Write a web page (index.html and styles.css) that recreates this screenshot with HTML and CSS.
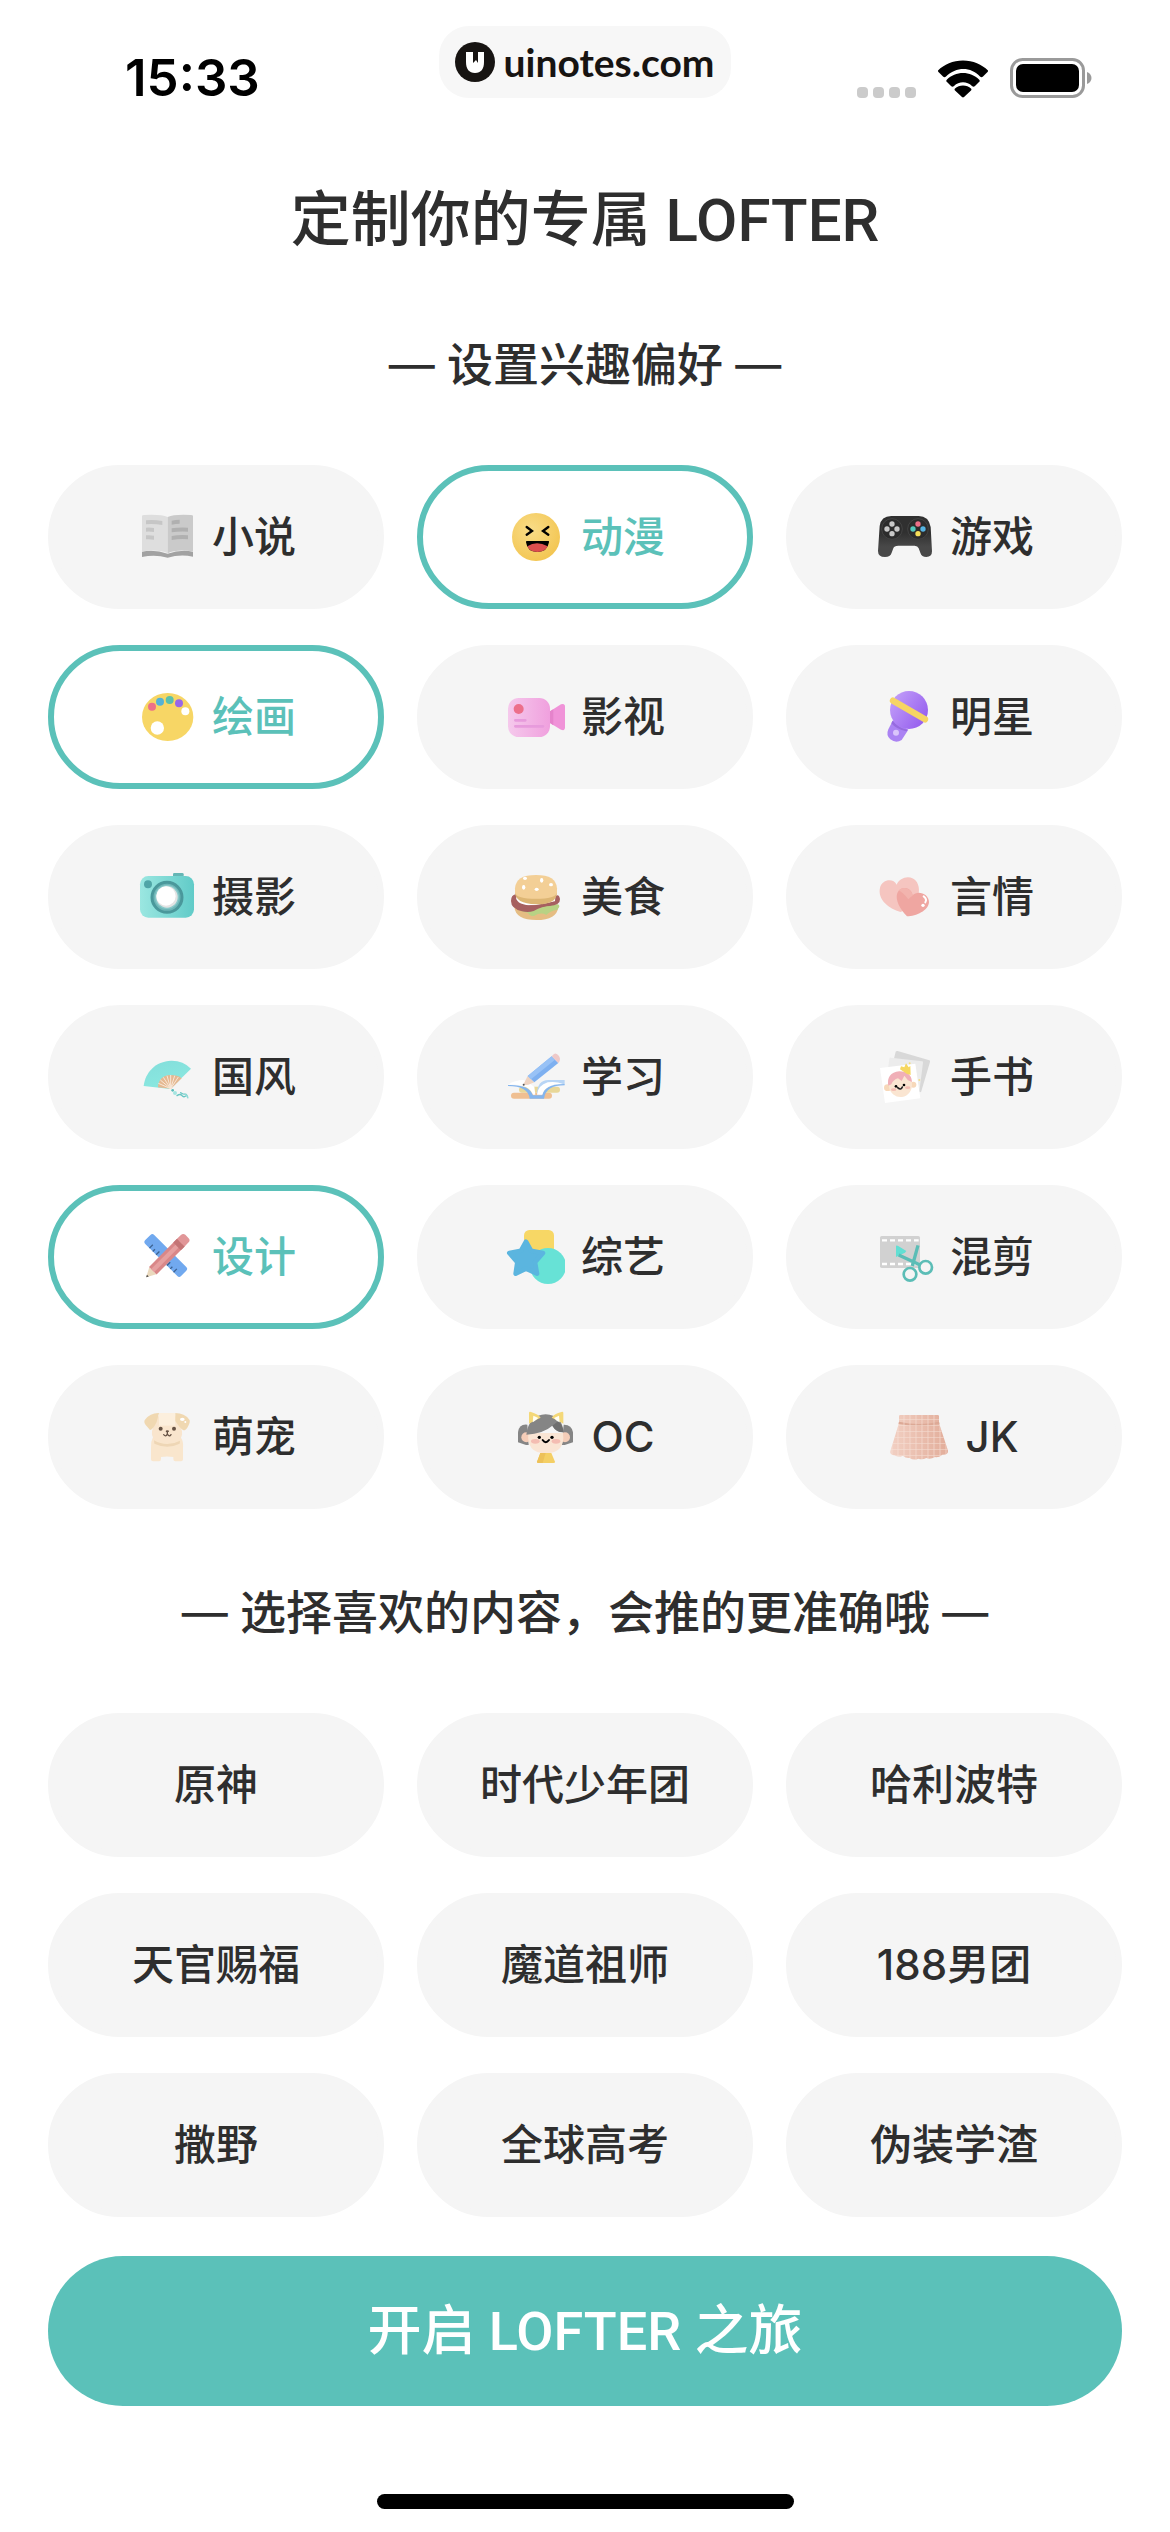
FILE: index.html
```html
<!DOCTYPE html>
<html lang="zh-CN">
<head>
  <meta charset="UTF-8" />
  <meta name="viewport" content="width=device-width, initial-scale=1.0" />
  <title>LOFTER</title>
  <link rel="stylesheet" href="styles.css">
</head>
<body>
  <header class="status-bar">
    <span class="time">15:33</span>
    <div class="watermark">
      <svg class="watermark-logo" viewBox="0 0 40 40" aria-hidden="true">
        <circle cx="20" cy="20" r="20" fill="#171412"/>
        <path d="M11 10h7v11l3-3 2 3V10h6v10c0 7-3 11-9 11s-9-4-9-11z" fill="#fff"/>
      </svg>
      <span>uinotes.com</span>
    </div>
    <div class="status-icons">
      <svg class="signal" viewBox="0 0 60 12" aria-hidden="true" fill="#cbcbcb">
        <rect x="1" y="1" width="11" height="11" rx="4"/><rect x="17" y="1" width="11" height="11" rx="4"/>
        <rect x="33" y="1" width="11" height="11" rx="4"/><rect x="49" y="1" width="11" height="11" rx="4"/>
      </svg>
      <svg class="wifi" viewBox="0 0 50 37" aria-hidden="true">
        <path d="M25 0C15 0 6 4 0 10c0 1 0 1 1 2l4 4c1 1 2 1 3 0 10-10 25-10 34 0 1 1 2 1 3 0l4-4c1-1 1-1 1-2C44 4 35 0 25 0z"/>
        <path d="M25 12.500c-6 0-12 2.500-16 6.500-1 1-1 2 0 2.500l4 4c1 1 2 1 3 0 5-5 13-5 18 0 1 1 2 1 3 0l4-4c1-.5 1-1.500 0-2.500-4-4-10-6.500-16-6.500z"/>
        <path d="M25 25c-3 0-6 1.200-8 3-.6.600-.6 1.500 0 2l7 6.500c.6.600 1.400.600 2 0l7-6.500c.6-.5.600-1.400 0-2-2-1.800-5-3-8-3z"/>
      </svg>
      <svg class="battery" viewBox="0 0 82 40" aria-hidden="true">
        <rect x="1.500" y="1.500" width="72" height="37" rx="11" fill="none" stroke="#9a9a9a" stroke-width="3"/>
        <rect x="6" y="6" width="63" height="28" rx="7"/>
        <path d="M77 14c6 2 6 10 0 12z" fill="#9a9a9a"/>
      </svg>
    </div>
  </header>

  <main class="container">
    <h1 class="title">定制你的专属<span class="latin"> LOFTER</span></h1>

    <h2 class="section-title"><span class="dash">—</span> 设置兴趣偏好 <span class="dash">—</span></h2>
    <div class="chips">
      <button type="button" class="chip" aria-pressed="false">
        <svg class="chip-icon" viewBox="0 0 180 180" aria-hidden="true">
          <path d="M18 134q38-7 77 6 38-13 76-6v15q-38-8-76 3-38-11-77-2z" fill="#a2a2a2"/>
          <path d="M18 28q0-4 6-4 50-3 71 6v109q-26-13-77-6z" fill="#dedede"/>
          <path d="M171 28q0-4-6-4-50-3-70 6v109q26-13 76-6z" fill="#cacaca"/>
          <path d="M30 40q24-2 49 2v12q-25-4-49-2zM30 62q12-1 24 1v12q-12-2-24-1zM30 85q12-1 24 1v12q-12-2-24-1z" fill="#c6c6c6"/>
          <path d="M107 41q12-3 24-3v12q-12 0-24 3zM107 64q24-4 49-2v12q-25-2-49 2zM107 87q24-4 49-2v12q-25-2-49 2z" fill="#b0b0b0"/>
        </svg>
        小说
      </button>
      <button type="button" class="chip selected" aria-pressed="true">
        <svg class="chip-icon" viewBox="0 0 180 180" aria-hidden="true">
          <radialGradient id="face" cx=".4" cy=".35" r=".7"><stop offset="0" stop-color="#f8dc88"/><stop offset="1" stop-color="#f3c550"/></radialGradient>
          <circle cx="93" cy="90" r="72" fill="url(#face)"/>
          <path d="M65 60l16 12-16 11M130 60l-16 12 16 11" fill="none" stroke="#000" stroke-width="7" stroke-linecap="round"/>
          <path d="M66 102h64q3 0 2 4-5 29-35 29t-34-29q-1-4 3-4z" fill="#000"/>
          <path d="M67 118q28-18 61 0-8 17-31 17t-30-17z" fill="#dc4e4e"/>
        </svg>
        动漫
      </button>
      <button type="button" class="chip" aria-pressed="false">
        <svg class="chip-icon" viewBox="0 0 180 180" aria-hidden="true">
          <linearGradient id="pad" x2="0" y2="1"><stop offset=".4" stop-color="#303030"/><stop offset=".75" stop-color="#484848"/></linearGradient>
          <path d="M52 27h82q30 0 36 33l4 73q0 17-17 17-14 0-18-13l-5-13q-3-8-12-8H73q-13 0-15 8l-5 13q-4 13-20 13-21 0-21-18l5-75q4-30 35-30z" fill="url(#pad)"/>
          <circle cx="54" cy="66" r="31" fill="#2c2c2c" stroke="#434343" stroke-width="3"/>
          <circle cx="132" cy="66" r="31" fill="#2c2c2c" stroke="#434343" stroke-width="3"/>
          <g fill="#c8c8c8"><circle cx="54" cy="51" r="8"/><circle cx="39" cy="66" r="8"/><circle cx="69" cy="66" r="8"/><circle cx="54" cy="80" r="8"/></g>
          <circle cx="132" cy="51" r="8" fill="#ec6f87"/><circle cx="117" cy="66" r="8" fill="#54c8bd"/>
          <circle cx="147" cy="66" r="8" fill="#55b3e2"/><circle cx="132" cy="80" r="8" fill="#f7df59"/>
        </svg>
        游戏
      </button>

      <button type="button" class="chip selected" aria-pressed="true">
        <svg class="chip-icon" viewBox="0 0 180 180" aria-hidden="true">
          <ellipse cx="95" cy="90" rx="77" ry="72" fill="#f7d665"/>
          <circle cx="48" cy="59" r="12" fill="#ed7088"/><circle cx="72" cy="44" r="12" fill="#55b2d5"/>
          <circle cx="101" cy="39" r="12" fill="#5bc0ab"/><circle cx="129" cy="49" r="12" fill="#9967e8"/>
          <circle cx="148" cy="73" r="12" fill="#fff"/><circle cx="64" cy="123" r="20" fill="#fff"/>
        </svg>
        绘画
      </button>
      <button type="button" class="chip" aria-pressed="false">
        <svg class="chip-icon" viewBox="0 0 180 180" aria-hidden="true">
          <linearGradient id="video"><stop offset="0" stop-color="#f5c9ec"/><stop offset="1" stop-color="#f0a0de"/></linearGradient>
          <rect x="9" y="33" width="126" height="117" rx="32" fill="url(#video)"/>
          <path d="M135 73l33-21q12-4 12 7v62q0 12-12 7l-33-20z" fill="#f093d8"/>
          <path d="M135 73l10-6v48l-10-7z" fill="#e583cb"/>
          <circle cx="41" cy="66" r="15" fill="#ec6f8b"/>
          <path d="M31 100h30M31 118h83" stroke="#e79bdc" stroke-width="8" stroke-linecap="round"/>
        </svg>
        影视
      </button>
      <button type="button" class="chip" aria-pressed="false">
        <svg class="chip-icon" viewBox="0 0 180 180" aria-hidden="true">
          <linearGradient id="mic" x2="1" y2=".7"><stop offset="0" stop-color="#c6a5fa"/><stop offset="1" stop-color="#965fee"/></linearGradient>
          <path d="M57 100L43 127q-8 18 6 30 17 13 34 2l20-31z" fill="#ab83f3"/>
          <path d="M56 101q16 21 45 27l-4 5q-30-6-45-24z" fill="#966bdf"/>
          <circle cx="105" cy="69" r="57" fill="url(#mic)"/>
          <path d="M57 41l96 56" stroke="#f6d563" stroke-width="19" stroke-linecap="round"/>
          <circle cx="66" cy="137" r="9" fill="#dac5fb"/>
        </svg>
        明星
      </button>

      <button type="button" class="chip" aria-pressed="false">
        <svg class="chip-icon" viewBox="0 0 180 180" aria-hidden="true">
          <linearGradient id="camera"><stop offset="0" stop-color="#9be7e1"/><stop offset="1" stop-color="#61cbc8"/></linearGradient>
          <rect x="111" y="18" width="32" height="20" rx="4" fill="#65b6b5"/>
          <rect x="12" y="27" width="162" height="125" rx="25" fill="url(#camera)"/>
          <circle cx="36" cy="52" r="12" fill="#50a5a7"/>
          <circle cx="93" cy="91" r="45" fill="#6eb6b7" stroke="#4a989b" stroke-width="9"/>
          <circle cx="93" cy="90" r="36" fill="#8acaca"/>
          <circle cx="93" cy="90" r="32" fill="#e4e4e4"/><circle cx="90" cy="87" r="29" fill="#fff"/>
        </svg>
        摄影
      </button>
      <button type="button" class="chip" aria-pressed="false">
        <svg class="chip-icon" viewBox="0 0 180 180" aria-hidden="true">
          <path d="M28 120q4 39 66 39t66-40z" fill="#e5bd83"/>
          <path d="M36 117q60-6 123-5 9 5-2 16-23 4-33 16-16-10-37 3-14 0-18-10-26-2-33-20z" fill="#b8d284"/>
          <path d="M18 102q0-18 14-20 48 22 118 6 12-10 15 8 1 19-32 21-20 0-47 15-16 5-35 1-33-8-33-31z" fill="#a66060"/>
          <path d="M33 92q6-7 14-7l104 5-1 13q-28 7-61 12-52 1-56-23z" fill="#fff"/>
          <path d="M23 103q28 19 55 12 43 1 72-12l-12 12-55 10-42-2z" fill="#a66060"/>
          <path d="M30 75q0 35 63 37t63-37z" fill="#ddb674"/>
          <path d="M30 64q2-40 63-40t63 40v13q-5 18-63 18T30 77z" fill="#f3cf96"/>
          <g fill="#fff"><ellipse cx="60" cy="34" rx="6" ry="5"/><ellipse cx="110" cy="40" rx="5" ry="7"/><ellipse cx="138" cy="53" rx="6" ry="5"/><ellipse cx="56" cy="61" rx="5" ry="7"/><ellipse cx="95" cy="67" rx="6" ry="5"/></g>
        </svg>
        美食
      </button>
      <button type="button" class="chip" aria-pressed="false">
        <svg class="chip-icon" viewBox="0 0 180 180" aria-hidden="true">
          <path d="M80 135C44 124 10 98 18 62c6-26 41-30 50-9 10-25 46-32 61-7 20 39-14 74-49 89z" fill="#f5c5c0"/>
          <path d="M99 148C80 128 62 100 70 78c10-24 43-18 46 7 14-17 50-5 49 21-2 25-38 42-66 42z" fill="#efa6a1"/>
          <path d="M74 70q16-14 34 0 7 7 8 16-7 3-13 11-15-20-29-27z" fill="#f2b4ae"/>
          <path d="M149 88q11 8 5 18" fill="none" stroke="#fff" stroke-width="6" stroke-linecap="round"/>
          <circle cx="147" cy="115" r="5" fill="#fff"/>
        </svg>
        言情
      </button>

      <button type="button" class="chip" aria-pressed="false">
        <svg class="chip-icon" viewBox="0 0 180 180" aria-hidden="true">
          <linearGradient id="fan" x2=".4" y2="1"><stop offset="0" stop-color="#83dedb"/><stop offset="1" stop-color="#8ae8e0"/></linearGradient>
          <path d="M23 117C28 75 59 43 105 41q36-1 60 24l-62 61z" fill="url(#fan)"/>
          <path d="M66 121q2-35 37-37 22 0 34 10l-32 31z" fill="#e5b891"/>
          <path d="M104 125L67 109M104 125L73 99M104 125L82 91M104 125L93 86M104 125V84M104 125l12-39M104 125l23-35" stroke="#f8e8d8" stroke-width="3"/>
          <circle cx="110" cy="130" r="4" fill="#58bcb7"/><circle cx="117" cy="138" r="6" fill="#a5e5e1"/>
          <path d="M123 146q10-7 15 0t15-1M134 137q6 5 17 5" fill="none" stroke="#68c6c3" stroke-width="4" stroke-linecap="round"/>
          <path d="M145 141q10 3 11 13" fill="none" stroke="#91dcd8" stroke-width="4"/>
        </svg>
        国风
      </button>
      <button type="button" class="chip" aria-pressed="false">
        <svg class="chip-icon" viewBox="0 0 180 180" aria-hidden="true">
          <rect x="42" y="119" width="123" height="18" rx="9" fill="#e8d798"/>
          <rect x="18" y="137" width="123" height="18" rx="9" fill="#efbf92"/>
          <path d="M96 141q1-42 34-42h49v12q-56-1-70 33z" fill="#b8d5f5"/>
          <path d="M9 114q63-2 75 31h27q8-34 68-34v4q-57 0-62 40H74q-4-38-65-38z" fill="#84b5ee"/>
          <path d="M9 113q21-14 47-14l32 20 3 24h-7Q70 108 9 113z" fill="#fff"/>
          <path d="M96 143q3-28 32-37 23-4 46 4-54 1-62 33z" fill="#fff"/>
          <path d="M68 87l20 19-18 7-16 2z" fill="#efd4c2"/>
          <path d="M68 87l72-59 20 20-72 58z" fill="#7eb0f0"/>
          <path d="M68 87l72-59 10 10-72 59z" fill="#98c2f6"/>
          <path d="M140 28l7-7q6-4 13 4 8 9 3 19l-3 4z" fill="#eec9c8"/>
          <circle cx="56" cy="113" r="3" fill="#555"/>
        </svg>
        学习
      </button>
      <button type="button" class="chip" aria-pressed="false">
        <svg class="chip-icon" viewBox="0 0 180 180" aria-hidden="true">
          <path d="M65 14q2-3 6-2l95 28q3 1 2 5l-27 91-99-29z" fill="#d8d8d8"/>
          <path d="M46 35q1-4 5-3l93 11q4 0 3 4l-13 102-101-14z" fill="#ececec"/>
          <path d="M18 63l106-13 15 104-106 14z" fill="#fff"/>
          <ellipse cx="41" cy="122" rx="11" ry="10" fill="#f7d8b9"/><ellipse cx="118" cy="113" rx="9" ry="9" fill="#f7d8b9"/>
          <ellipse cx="79" cy="113" rx="35" ry="37" fill="#fae5d1" transform="rotate(-8 79 113)"/>
          <path d="M43 116Q36 78 76 73q36 0 38 32l-12-5-11-14-8 16-11-8q-14 4-20 18z" fill="#f0afb7"/>
          <path d="M78 67l3-9 10 3 5-12 8 12 5-4 1 27-12-4z" fill="#f6d75f"/>
          <circle cx="66" cy="118" r="4"/><circle cx="90" cy="114" r="4"/>
          <path d="M71 122q10 9 14-2" fill="none" stroke="#222" stroke-width="5" stroke-linecap="round"/>
          <ellipse cx="59" cy="128" rx="8" ry="4" fill="#f4bdb3"/><ellipse cx="101" cy="122" rx="8" ry="4" fill="#f4bdb3"/>
          <circle cx="107" cy="49" r="3" fill="#f3de83"/><circle cx="136" cy="99" r="3" fill="#f3de83"/>
        </svg>
        手书
      </button>

      <button type="button" class="chip selected" aria-pressed="true">
        <svg class="chip-icon" viewBox="0 0 180 180" aria-hidden="true">
          <g transform="rotate(45 90 86)">
            <rect x="13" y="67" width="152" height="38" rx="8" fill="#71a9ef"/>
            <path d="M39 91v14M53 96v9M67 91v14M113 91v14M127 96v9M141 91v14" stroke="#3d6392" stroke-width="4"/>
          </g>
          <g transform="rotate(-45 90 90)">
            <path d="M5 91l28-15v30z" fill="#ead9bd"/><path d="M5 91l7-4v8z" fill="#4c4947"/>
            <path d="M33 75h120v32H33z" fill="#d98788"/><path d="M33 84h120v13H33z" fill="#e6a0a0"/>
            <path d="M136 75h16v32h-16z" fill="#c47576"/>
            <path d="M152 75h15q11 0 11 9v14q0 9-11 9h-15z" fill="#e19698"/>
          </g>
        </svg>
        设计
      </button>
      <button type="button" class="chip" aria-pressed="false">
        <svg class="chip-icon" viewBox="0 0 180 180" aria-hidden="true">
          <rect x="57" y="9" width="90" height="80" rx="16" fill="#f7d765"/>
          <circle cx="129" cy="117" r="54" fill="#67e2d6"/>
          <path d="M63 44l15 27 36 7-24 28 6 34-33-15-31 15 5-34-24-28 35-7z" fill="#5bb5df" stroke="#5bb5df" stroke-width="14" stroke-linejoin="round"/>
        </svg>
        综艺
      </button>
      <button type="button" class="chip" aria-pressed="false">
        <svg class="chip-icon" viewBox="0 0 180 180" aria-hidden="true">
          <rect x="18" y="27" width="120" height="96" rx="5" fill="#d1d1d1"/>
          <path d="M24 40h110M24 111h110" stroke="#fff" stroke-width="7" stroke-dasharray="15 9"/>
          <path d="M66 56q4-1 8 2l23 14q-2 6-12 9L66 90z" fill="#62dfd3"/>
          <path d="M74 84l63 29M132 55l-17 62" stroke="#5bbdb6" stroke-width="10"/>
          <circle cx="108" cy="142" r="19" fill="#f5f5f5" stroke="#5bbdb6" stroke-width="8"/>
          <circle cx="155" cy="121" r="19" fill="#f5f5f5" stroke="#5bbdb6" stroke-width="8"/>
        </svg>
        混剪
      </button>

      <button type="button" class="chip" aria-pressed="false">
        <svg class="chip-icon" viewBox="0 0 180 180" aria-hidden="true">
          <path d="M51 91q-8 15-6 31v35q0 6 6 6h18q6 0 6-7v-6q18-3 37 0v6q0 7 6 7h17q6 0 6-6v-35q2-18-7-31z" fill="#f9e6cd"/>
          <path d="M54 100q38 22 78 1l-1 9q-37 18-76 0z" fill="#eed6b5"/>
          <path d="M48 73q-4 34 45 35t45-35l-13-45H61z" fill="#f9e5cd"/>
          <path d="M69 18h49v38H69z" fill="#fcefdd"/>
          <path d="M69 18Q43 17 27 38q-5 5 2 16l13 15q8 0 20-24z" fill="#f0d8b1"/>
          <path d="M118 18q28 0 42 20 4 5-3 18-6 14-15 14-10-6-24-28z" fill="#f0d8b1"/>
          <circle cx="74" cy="65" r="6" fill="#655143"/><circle cx="114" cy="65" r="6" fill="#655143"/>
          <path d="M83 83q7 8 11-2 6 10 11 2M94 80v-5" fill="none" stroke="#655143" stroke-width="4" stroke-linecap="round"/>
          <ellipse cx="94" cy="73" rx="5" ry="3" fill="#655143"/>
          <ellipse cx="139" cy="37" rx="7" ry="5" fill="#fff"/><circle cx="148" cy="45" r="3" fill="#fff"/>
        </svg>
        萌宠
      </button>
      <button type="button" class="chip" aria-pressed="false">
        <svg class="chip-icon" viewBox="0 0 180 180" aria-hidden="true">
          <path d="M6 106V76q3-26 28-23l4 61-8 0z" fill="#858585"/><path d="M171 106V76q-4-24-28-23l-6 61 9 0z" fill="#858585"/>
          <circle cx="31" cy="91" r="15" fill="#f5cdb8"/><circle cx="147" cy="91" r="15" fill="#f5cdb8"/>
          <path d="M37 78h104q8 60-52 61-58 0-52-61z" fill="#fae5d4"/>
          <path d="M31 83q8-60 58-61 50 3 53 53-22 1-33-19-27 24-78 27z" fill="#858585"/>
          <path d="M109 56l17-13q17 14 16 33-20 1-33-20z" fill="#6f6f6f"/>
          <path d="M39 50V18q0-5 6-3 22 7 29 17-16 7-35 18zM142 50V18q0-5-6-3-21 5-29 17 19 8 35 18z" fill="#f4d878"/>
          <path d="M50 46l2-20 15 7-11 9zM131 46l-2-20-15 7 9 9z" fill="#fffef4"/>
          <circle cx="70" cy="91" r="5"/><circle cx="108" cy="91" r="5"/>
          <path d="M80 99q9 13 19 0" fill="none" stroke="#000" stroke-width="6" stroke-linecap="round"/>
          <ellipse cx="58" cy="103" rx="13" ry="7" fill="#f4bdb2"/><ellipse cx="120" cy="103" rx="13" ry="7" fill="#f4bdb2"/>
          <path d="M73 138h33l11 26q1 4-5 4H68q-6 0-5-4z" fill="#f4cf65"/><path d="M73 138h16l-9 30H68q-6 0-5-4z" fill="#edc159"/>
        </svg>
        OC
      </button>
      <button type="button" class="chip" aria-pressed="false">
        <svg class="chip-icon" viewBox="0 0 180 180" aria-hidden="true">
          <linearGradient id="skirt"><stop offset="0" stop-color="#f2d0c3"/><stop offset="1" stop-color="#e2ad9a"/></linearGradient>
          <pattern id="plaid" width="18" height="18" patternUnits="userSpaceOnUse"><path d="M0 1h18M9 0v18" stroke="#f8e5dd" stroke-width="2" opacity=".8"/></pattern>
          <path d="M30 28q0-4 4-4h112q4 0 4 4v20l27 83q1 13-17 12-12 10-22 7-14 8-26 3-12 6-24 2-14 6-26-2-12 2-20-7-14 6-25-1-15-1-13-12l26-85z" fill="url(#skirt)"/>
          <path d="M30 44q60 14 120 0l2 6q-62 14-124 0z" fill="#dda996"/>
          <path d="M30 28q0-4 4-4h112q4 0 4 4v20l27 83q1 13-17 12-12 10-22 7-14 8-26 3-12 6-24 2-14 6-26-2-12 2-20-7-14 6-25-1-15-1-13-12l26-85z" fill="url(#plaid)"/>
        </svg>
        JK
      </button>
    </div>

    <h2 class="section-title"><span class="dash">—</span> 选择喜欢的内容，会推的更准确哦 <span class="dash">—</span></h2>
    <div class="chips">
      <button type="button" class="chip">原神</button>
      <button type="button" class="chip">时代少年团</button>
      <button type="button" class="chip">哈利波特</button>
      <button type="button" class="chip">天官赐福</button>
      <button type="button" class="chip">魔道祖师</button>
      <button type="button" class="chip">188男团</button>
      <button type="button" class="chip">撒野</button>
      <button type="button" class="chip">全球高考</button>
      <button type="button" class="chip">伪装学渣</button>
    </div>

    <button type="button" class="start-button">开启<span class="latin"> LOFTER </span>之旅</button>
  </main>
  <div class="home-indicator"></div>
</body>
</html>
```
FILE: styles.css
```css
* {
  box-sizing: border-box;
}
body {
  margin: 0;
  background: #fff;
  color: #2e2e2e;
  font-family: Inter, "Noto Sans CJK SC", sans-serif;
  font-weight: 500;
}
button {
  font: inherit;
  color: inherit;
  cursor: pointer;
}
.status-bar {
  display: grid;
  grid-template-columns: 1fr auto 1fr;
  align-items: start;
  padding: 26px 78px 0;
  height: 128px;
  color: #000;
}
.time {
  padding: 20px 0 0 47px;
  font-size: 51px;
  line-height: 64px;
  font-weight: 600;
}
.watermark {
  display: flex;
  align-items: center;
  gap: 8px;
  height: 72px;
  padding: 0 16px;
  border-radius: 30px;
  background: #f7f7f7;
  color: #171412;
  font-family: Lato, sans-serif;
  font-size: 39px;
  line-height: 72px;
  font-weight: 700;
}
.watermark-logo {
  width: 40px;
  height: 40px;
}
.status-icons {
  display: flex;
  justify-content: flex-end;
  align-items: flex-end;
  gap: 22px;
  padding-top: 32px;
}
.signal {
  width: 60px;
  height: 12px;
}
.wifi {
  width: 50px;
  height: 38px;
}
.battery {
  width: 82px;
  height: 40px;
}
.container {
  padding: 49px 48px 0;
}
.title {
  margin: 0;
  font-size: 60px;
  line-height: 84px;
  font-weight: 500;
  text-align: center;
}
.latin {
  font-family: Roboto, sans-serif;
  line-height: 1;
}
.section-title {
  margin: 71px 0 69px;
  font-size: 46px;
  line-height: 64px;
  font-weight: 500;
  text-align: center;
}
.dash {
  font-weight: 400;
}
.chips {
  display: grid;
  grid-template-columns: repeat(3, 1fr);
  gap: 36px 33px;
}
.chip {
  display: flex;
  align-items: center;
  justify-content: center;
  gap: 16px;
  height: 144px;
  padding: 0;
  border: 6px solid #f5f5f5;
  border-radius: 72px;
  background: #f5f5f5;
  font-size: 42px;
  line-height: 60px;
}
.chip.selected {
  border-color: #5bc1b9;
  background: #fff;
  color: #5bc1b9;
}
.chip-icon {
  width: 60px;
  height: 60px;
}
.start-button {
  display: block;
  width: 100%;
  height: 150px;
  margin-top: 39px;
  padding: 0;
  border: none;
  border-radius: 75px;
  background: #5bc1b9;
  color: #fff;
  font-size: 54px;
  line-height: 76px;
}
.home-indicator {
  width: 417px;
  height: 15px;
  margin: 88px auto 23px;
  border-radius: 8px;
  background: #000;
}
```
